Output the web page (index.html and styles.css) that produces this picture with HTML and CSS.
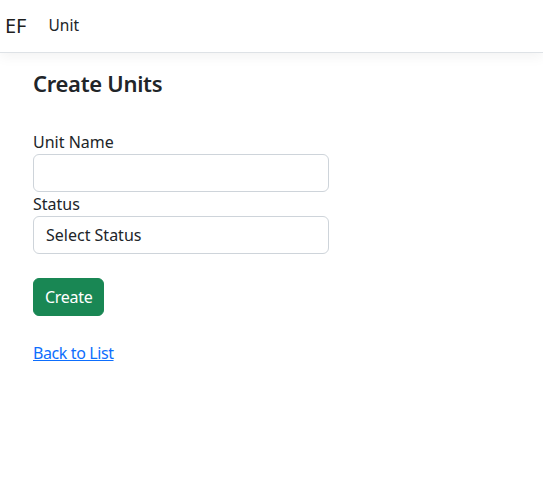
FILE: index.html
```html
<!DOCTYPE html>
<html lang="en">
<head>
<meta charset="utf-8">
<title>Create Units</title>
<link rel="stylesheet" href="styles.css">
</head>
<body>
<header class="navbar">
  <a class="brand" href="#">EF</a>
  <a class="nav-link" href="#">Unit</a>
</header>
<main class="container">
  <h4 class="title">Create Units</h4>
  <form class="form">
    <div class="field">
      <label class="label" for="name">Unit Name</label>
      <input class="control" id="name" type="text">
    </div>
    <div class="field">
      <label class="label" for="status">Status</label>
      <select class="control select" id="status">
        <option>Select Status</option>
      </select>
    </div>
    <div class="actions">
      <button class="btn" type="button">Create</button>
    </div>
  </form>
  <div class="back">
    <a class="link" href="#">Back to List</a>
  </div>
</main>
</body>
</html>
```
FILE: styles.css
```css
* { box-sizing: border-box; }
html, body { margin: 0; padding: 0; }
body {
  font-family: "Segoe UI", "Noto Sans", sans-serif;
  font-size: 16px;
  line-height: 1.5;
  color: #212529;
  background: #fff;
}
.navbar {
  height: 53px;
  display: flex;
  align-items: center;
  padding: 0 5px;
  border-bottom: 1px solid #dee2e6;
  box-shadow: 0 4px 12px rgba(0,0,0,0.05);
}
.brand {
  font-size: 20px;
  color: rgba(0,0,0,0.9);
  text-decoration: none;
  margin-right: 14px;
  line-height: 30px;
}
.nav-link {
  font-size: 15.5px;
  color: #212529;
  text-decoration: none;
  padding: 8px;
}
.container {
  padding: 17px 33px 0;
}
.title {
  font-size: 22px;
  font-weight: 600;
  letter-spacing: -0.3px;
  line-height: 1.2;
  margin: 0 0 34px;
}
.form { width: 296px; }
.field { display: flex; flex-direction: column; }
.label { display: block; }
.control {
  display: block;
  width: 100%;
  height: 38px;
  padding: 6px 12px;
  font: inherit;
  color: #212529;
  background: #fff;
  border: 1px solid #ced4da;
  border-radius: 6px;
  appearance: none;
  -webkit-appearance: none;
}
.actions { margin-top: 24px; }
.btn {
  font: inherit;
  letter-spacing: -0.3px;
  color: #fff;
  background: #198754;
  border: 1px solid #198754;
  border-radius: 6px;
  height: 38px;
  padding: 0 11px;
}
.back { margin-top: 25px; }
.link { color: #0d6efd; letter-spacing: -0.4px; }
```
